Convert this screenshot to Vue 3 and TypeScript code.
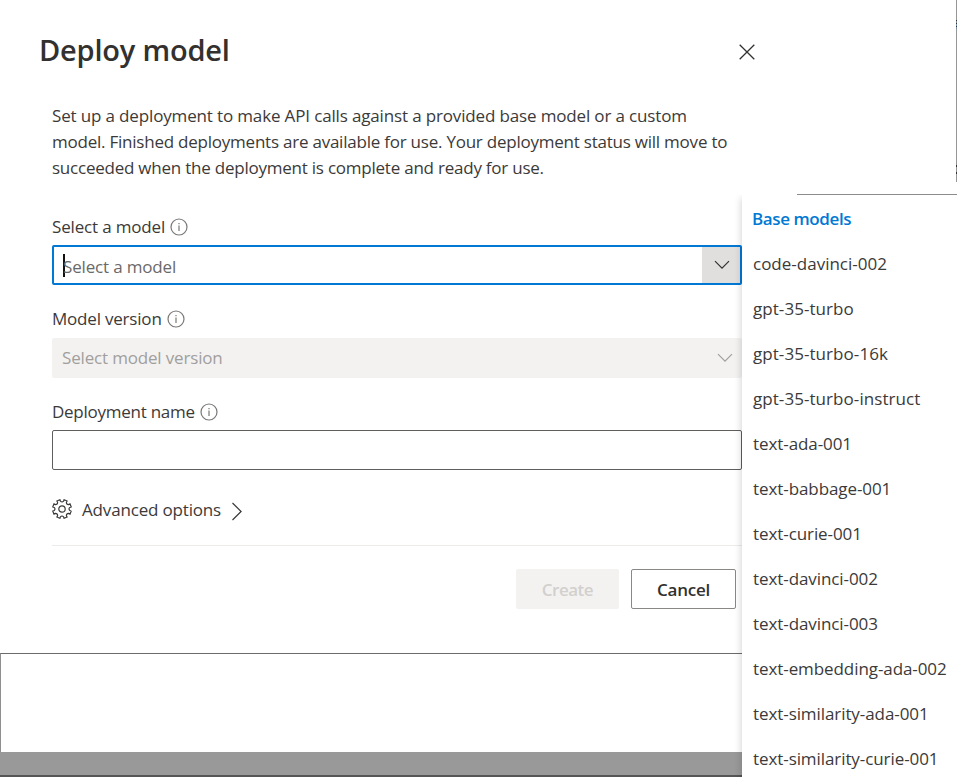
<script setup lang="ts">
import { ref } from 'vue'

const description: string[] = [
  'Set up a deployment to make API calls against a provided base model or a custom',
  'model. Finished deployments are available for use. Your deployment status will move to',
  'succeeded when the deployment is complete and ready for use.',
]

const baseModels: string[] = [
  'code-davinci-002',
  'gpt-35-turbo',
  'gpt-35-turbo-16k',
  'gpt-35-turbo-instruct',
  'text-ada-001',
  'text-babbage-001',
  'text-curie-001',
  'text-davinci-002',
  'text-davinci-003',
  'text-embedding-ada-002',
  'text-similarity-ada-001',
  'text-similarity-curie-001',
]

const deploymentName = ref('')

// Eight-toothed cog outline centred on (10, 10), with rounded notches between teeth
function cogPath(): string {
  const point = (radius: number, degrees: number): string => {
    const a = (degrees * Math.PI) / 180
    return `${(10 + radius * Math.cos(a)).toFixed(2)} ${(10 + radius * Math.sin(a)).toFixed(2)}`
  }
  let d = `M${point(9.5, 11.5)}`
  for (let i = 0; i < 8; i++) {
    const a = 22.5 + i * 45
    d += `L${point(9.5, a + 10)}L${point(8, a + 11)}Q${point(6.2, a + 22.5)} ${point(8, a + 34)}L${point(9.5, a + 35)}`
  }
  return d + 'Z'
}
const cog = cogPath()
</script>

<template>
  <div class="page">
    <section class="dialog">
      <header class="head">
        <h1>Deploy model</h1>
        <button class="close" aria-label="Close">
          <svg width="16" height="16" viewBox="0 0 16 16"><path d="M.7.7l14.6 14.6M15.3.7L.7 15.3" /></svg>
        </button>
      </header>

      <div class="body">
        <p class="description">
          <span v-for="(line, i) in description" :key="i" :class="['line', 'line-' + i]">{{ line }}</span>
        </p>

        <div class="field">
          <label>Select a model
            <svg class="info" width="18" height="18" viewBox="0 0 18 18"><circle cx="9" cy="9" r="8" /><path d="M9 7.5v5.5M9 5v1.3" /></svg>
          </label>
          <div class="combo active">
            <span class="caret"></span>
            <span class="placeholder">Select a model</span>
            <span class="toggle">
              <svg width="16" height="10" viewBox="0 0 16 10"><path d="M1 1.2l7 7 7-7" /></svg>
            </span>
          </div>
        </div>

        <div class="field version">
          <label>Model version
            <svg class="info" width="18" height="18" viewBox="0 0 18 18"><circle cx="9" cy="9" r="8" /><path d="M9 7.5v5.5M9 5v1.3" /></svg>
          </label>
          <div class="combo disabled">
            <span class="placeholder">Select model version</span>
            <svg width="16" height="10" viewBox="0 0 16 10"><path d="M1 1.2l7 7 7-7" /></svg>
          </div>
        </div>

        <div class="field name">
          <label>Deployment name
            <svg class="info" width="18" height="18" viewBox="0 0 18 18"><circle cx="9" cy="9" r="8" /><path d="M9 7.5v5.5M9 5v1.3" /></svg>
          </label>
          <input v-model="deploymentName" type="text" />
        </div>

        <div class="advanced">
          <svg class="cog" width="20" height="20" viewBox="0 0 20 20"><path :d="cog" /><circle cx="10" cy="10" r="3.2" /></svg>
          <span class="advanced-label">Advanced options</span>
          <svg class="arrow" width="12" height="19" viewBox="0 0 12 19"><path d="M1.5 1l8.6 8.5L1.5 18" /></svg>
        </div>

        <footer class="actions">
          <button class="create" disabled>Create</button>
          <button class="cancel">Cancel</button>
        </footer>
      </div>
    </section>

    <aside class="side">
      <div class="side-top">
        <i class="mark upper"></i>
        <i class="mark lower"></i>
      </div>
      <div class="side-bottom"></div>
    </aside>

    <div class="panel"></div>
    <div class="strip"></div>

    <div class="menu">
      <div class="menu-head">Base models</div>
      <div
        v-for="model in baseModels"
        :key="model"
        :class="['menu-item', { gpt: model.startsWith('gpt'), code: model.startsWith('code') }]"
      >{{ model }}</div>
    </div>
  </div>
</template>

<style>
body {
  margin: 0;
  background: #fff;
  overflow: hidden;
}
</style>

<style scoped>
.page {
  position: relative;
  display: grid;
  grid-template-columns: 797px 1fr;
  grid-template-rows: 653px 99px 25px;
  width: 957px;
  height: 777px;
  overflow: hidden;
  box-sizing: border-box;
  background: #fff;
  color: #3b3a39;
  font: 17px/26px "Open Sans", "Noto Sans", sans-serif;
  letter-spacing: -0.17px;
}
.page * {
  box-sizing: border-box;
}
svg {
  fill: none;
  stroke: currentColor;
  stroke-width: 1.2;
  flex: none;
}
.head {
  display: flex;
  justify-content: space-between;
  align-items: center;
  height: 103px;
  padding: 0 42px 0 39px;
}
h1 {
  margin: 0;
  padding-bottom: 3px;
  color: #323130;
  font-size: 29px;
  line-height: 40px;
  font-weight: 600;
  letter-spacing: -0.2px;
}
.close {
  display: flex;
  padding: 1px 0 0;
  border: 0;
  background: none;
  color: #323130;
}
.close svg {
  stroke-width: 1.3;
}
.body {
  width: 690px;
  margin-left: 52px;
}
.description {
  margin: 0 0 32px;
}
.line {
  display: block;
  white-space: nowrap;
}
.line-0 {
  letter-spacing: -0.15px;
}
.line-1,
.line-2 {
  letter-spacing: -0.23px;
}
.field {
  margin-bottom: 20px;
}
label {
  display: flex;
  align-items: center;
  gap: 5px;
  height: 26px;
  margin-bottom: 6px;
  padding-top: 2px;
}
.version label {
  margin-bottom: 7px;
  letter-spacing: -0.2px;
}
.name label {
  letter-spacing: -0.26px;
}
.info {
  color: #7a7876;
}
.combo {
  display: flex;
  align-items: center;
  height: 40px;
  border-radius: 2px;
}
.combo .placeholder {
  flex: 1;
}
.active {
  border: 2px solid #0078d4;
  padding-left: 9px;
  color: #6b6967;
}
.active .placeholder {
  padding-top: 3px;
}
.caret {
  width: 2px;
  height: 23px;
  margin-right: -2px;
  background: #111;
}
.toggle {
  display: flex;
  align-items: center;
  justify-content: center;
  width: 38px;
  height: 36px;
  padding-left: 2px;
  background: #e1dfdd;
  color: #323130;
}
.disabled {
  padding: 0 9px 0 10px;
  background: #f3f2f1;
  color: #a19f9d;
}
input {
  display: block;
  width: 100%;
  height: 40px;
  padding: 0 8px;
  border: 1px solid #605e5c;
  border-radius: 2px;
  font: inherit;
}
.advanced {
  display: flex;
  align-items: center;
  height: 50px;
  margin-top: 26px;
  padding-bottom: 24px;
  border-bottom: 1px solid #edebe9;
}
.advanced-label {
  padding-top: 2px;
}
.cog {
  margin-right: 10px;
}
.arrow {
  margin: 6px 0 0 10px;
}
.actions {
  display: flex;
  justify-content: flex-end;
  gap: 12px;
  padding: 23px 6px 0 0;
}
.actions button {
  height: 40px;
  padding: 2px 0 0;
  border-radius: 2px;
  font: inherit;
  font-weight: 600;
}
.actions .create {
  width: 103px;
  border: 0;
  background: #f3f2f1;
  color: #d2d0ce;
  letter-spacing: -0.5px;
}
.actions .cancel {
  width: 105px;
  border: 1px solid #8a8886;
  background: #fff;
  color: #323130;
  letter-spacing: -0.24px;
}
.side {
  display: flex;
  flex-direction: column;
}
.side-top {
  position: relative;
  height: 182px;
  border-right: 1px solid #969696;
}
.mark {
  position: absolute;
  right: -1px;
  width: 1px;
}
.upper {
  top: 20px;
  height: 9px;
  background: repeating-linear-gradient(#333 0 1px, #7b8fa8 1px 3px);
}
.lower {
  top: 165px;
  height: 9px;
  border-top: 2px solid #333;
  border-bottom: 2px solid #333;
}
.side-bottom {
  margin-top: 12px;
  border-top: 1px solid #8c8c8c;
}
.panel {
  grid-column: 1 / -1;
  border-top: 1px solid #6b6b6b;
  border-left: 1px solid #8f8f8f;
}
.strip {
  grid-column: 1 / -1;
  background: #999;
  border-bottom: 2px solid #555;
}
.menu {
  position: absolute;
  left: 742px;
  top: 195px;
  width: 230px;
  height: 600px;
  padding: 1px 0 0 11px;
  background: #fff;
  box-shadow: 0 3px 8px rgba(0, 0, 0, 0.2);
  clip-path: inset(0 0 0 -12px);
  line-height: 45px;
  white-space: nowrap;
  letter-spacing: -0.08px;
}
.menu-head {
  height: 45px;
  margin-left: -1px;
  color: #0078d4;
  font-weight: 600;
  letter-spacing: -0.4px;
}
.menu-item {
  height: 45px;
}
.menu-item.gpt {
  letter-spacing: 0.06px;
}
.menu-item.code {
  letter-spacing: 0;
}
</style>
